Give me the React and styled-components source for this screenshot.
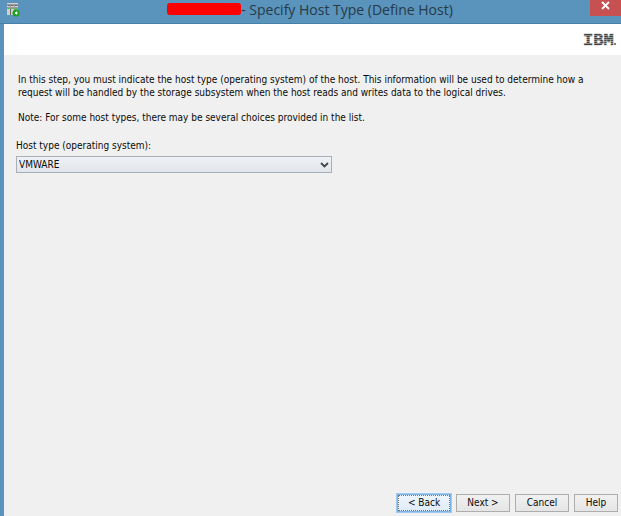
import React, { useState } from 'react';
import styled, { createGlobalStyle } from 'styled-components';

const GlobalStyle = createGlobalStyle`
  * {
    box-sizing: border-box;
  }

  body {
    margin: 0;
    background: #5a93bb;
    color: #0a0a0a;
    font-family: 'DejaVu Sans Condensed', 'DejaVu Sans', sans-serif;
    font-size: 10px;
    line-height: 12px;
  }
`;

const Window = styled.div`
  display: flex;
  flex-direction: column;
  min-height: 100vh;
  background: #5a93bb;
`;

const TitleBar = styled.header`
  display: flex;
  justify-content: space-between;
  align-items: flex-start;
  height: 24px;
  padding-left: 7px;
  border-bottom: 1px solid #4580a8;
`;

const AppIcon = styled.svg`
  flex: none;
  width: 13px;
  height: 14px;
  margin-top: 3px;
`;

const Title = styled.h1`
  display: flex;
  align-items: center;
  margin: 0;
  padding-left: 10px;
  color: #263a48;
  font-family: 'Open Sans', 'Noto Sans', sans-serif;
  font-size: 14px;
  font-weight: 400;
  line-height: 20px;
  white-space: nowrap;
`;

const Redacted = styled.span`
  width: 74px;
  height: 12px;
  margin-bottom: 2px;
  border-radius: 3px;
  background: #ff0000;
`;

const CloseButton = styled.button`
  display: flex;
  justify-content: center;
  width: 31px;
  height: 16px;
  padding: 1px 0 0;
  border: 0;
  background: #c75050;
`;

const Body = styled.div`
  display: flex;
  flex: 1;
  flex-direction: column;
  margin-left: 4px;
  background: #f0f0f0;
`;

const Banner = styled.div`
  display: flex;
  justify-content: flex-end;
  align-items: center;
  height: 31px;
  padding-right: 4px;
  background: #fff;
`;

const Content = styled.main`
  flex: 1;
  padding: 18px 12px;
`;

const Text = styled.p`
  margin: 0 24px 12px 2px;
  line-height: 13px;
`;

const Field = styled.div`
  display: flex;
  flex-direction: column;
  gap: 4px;
  padding-top: 4px;
`;

const SelectBox = styled.div`
  display: grid;
  width: 316px;
  max-width: 100%;
  align-items: center;

  > * {
    grid-area: 1 / 1;
  }
`;

const Select = styled.select`
  width: 100%;
  height: 17px;
  padding: 0 20px 0 2px;
  appearance: none;
  border: 1px solid #a9afb8;
  border-radius: 0;
  background: linear-gradient(#eff2f5, #e1e6ec);
  color: inherit;
  font: inherit;
`;

const Arrow = styled.svg`
  justify-self: end;
  width: 9px;
  height: 6px;
  margin-right: 3px;
  pointer-events: none;
`;

const Footer = styled.footer`
  display: flex;
  justify-content: flex-end;
  gap: 5px;
  padding: 0 3px 4px;
`;

const Button = styled.button`
  width: ${(props) => (props.$narrow ? '44px' : '54px')};
  height: 18px;
  padding: 0;
  border: 1px solid ${(props) => (props.$active ? '#7db4e6' : '#adadad')};
  outline: ${(props) => (props.$active ? '1px dotted #777' : 'none')};
  outline-offset: -2px;
  background: ${(props) => (props.$active
    ? 'linear-gradient(#eef5fc, #dfecf8)'
    : 'linear-gradient(#f1f1f1, #e5e5e5)')};
  box-shadow: ${(props) => (props.$active ? '0 0 0 1px #9ccaf3' : 'none')};
  color: inherit;
  font: inherit;
`;

const ServerIcon = () => (
  <AppIcon viewBox="0 0 13 14" aria-hidden="true">
    <path fill="#9a9a9a" d="M0 0h11v12H0z" />
    <path fill="#d0d0d0" d="M0 0h11v1H0zM0 3h3v1H0zM4 3h3v1H4zM8 3h3v1H8zM0 6h3v6H0zM4 6h3v6H4z" />
    <path fill="#696969" d="M1 2h2v1H1zM4 2h2v1H4zM8 2h2v1H8zM3 6h1v6H3z" />
    <path fill="#41c94b" d="M1 5h2v1H1zM4 5h2v1H4zM8 5h2v1H8z" />
    <circle cx="9" cy="10" r="3.5" fill="#1ba31b" />
    <path fill="#fff" d="M8 9h1V8l2 2-2 2v-1H8z" />
  </AppIcon>
);

const BrandLogo = () => (
  <svg width="34" height="20" viewBox="0 0 34 20" role="img" aria-label="IBM">
    <defs>
      <pattern id="bars" width="2" height="2" patternUnits="userSpaceOnUse">
        <path fill="#444" d="M0 0h2v1H0z" />
        <path fill="#8c8c8c" d="M0 1h2v1H0z" />
      </pattern>
    </defs>
    <text
      x="0"
      y="15"
      fill="url(#bars)"
      stroke="url(#bars)"
      strokeWidth="0.5"
      fontFamily="Liberation Mono, monospace"
      fontSize="17"
      fontWeight="700"
    >
      IBM
    </text>
    <circle cx="32" cy="14" r="1" fill="#555" />
  </svg>
);

const App = () => {
  const [hostType, setHostType] = useState('VMWARE');

  return (
    <>
      <GlobalStyle />
      <Window>
        <TitleBar>
          <ServerIcon />
          <Title>
            <Redacted />
            <span>- Specify Host Type (Define Host)</span>
          </Title>
          <CloseButton type="button" aria-label="Close">
            <svg width="9" height="9" viewBox="0 0 9 9" aria-hidden="true">
              <path d="M1 1l7 7M8 1l-7 7" stroke="#fff" strokeWidth="1.8" />
            </svg>
          </CloseButton>
        </TitleBar>
        <Body>
          <Banner>
            <BrandLogo />
          </Banner>
          <Content>
            <Text>
              In this step, you must indicate the host type (operating system) of the host. This information
              will be used to determine how a request will be handled by the storage subsystem when the host
              reads and writes data to the logical drives.
            </Text>
            <Text>Note: For some host types, there may be several choices provided in the list.</Text>
            <Field>
              <label htmlFor="host-type">Host type (operating system):</label>
              <SelectBox>
                <Select
                  id="host-type"
                  value={hostType}
                  onChange={(event) => setHostType(event.target.value)}
                >
                  <option value="VMWARE">VMWARE</option>
                </Select>
                <Arrow viewBox="0 0 9 6" aria-hidden="true">
                  <path d="M1 1l3.5 3.5L8 1" fill="none" stroke="#444" strokeWidth="1.8" />
                </Arrow>
              </SelectBox>
            </Field>
          </Content>
          <Footer>
            <Button type="button" $active>&lt; Back</Button>
            <Button type="button">Next &gt;</Button>
            <Button type="button">Cancel</Button>
            <Button type="button" $narrow>Help</Button>
          </Footer>
        </Body>
      </Window>
    </>
  );
};

export default App;
